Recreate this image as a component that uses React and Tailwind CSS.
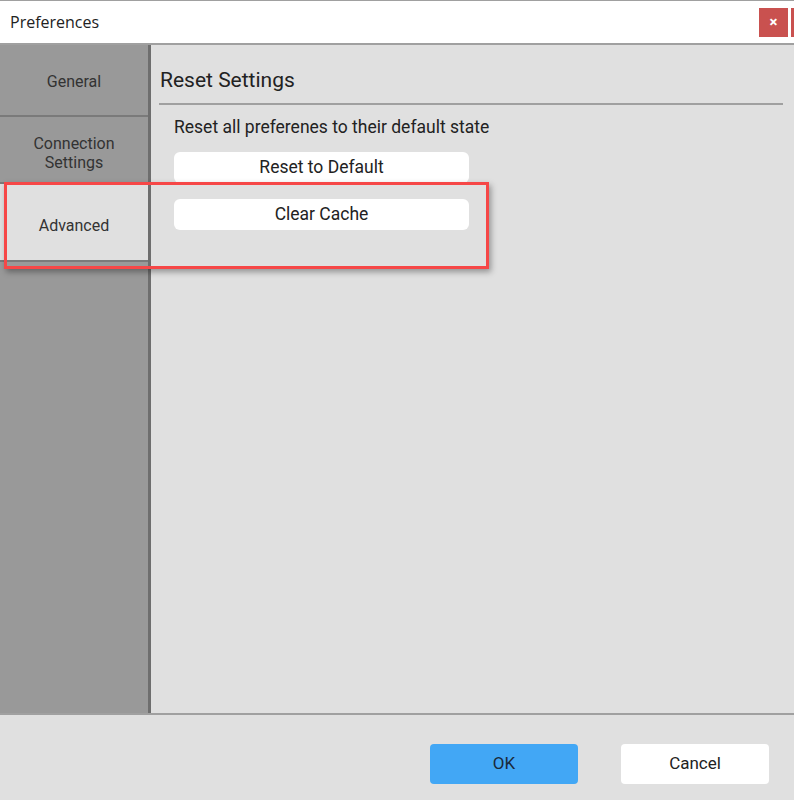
import React from "react";

export default function App() {
  return (
    <div className="relative w-[794px] h-[800px] bg-[#e0e0e0] overflow-hidden flex flex-col" style={{ fontFamily: "Roboto, 'Liberation Sans', sans-serif" }}>
      <div className="h-px bg-[#a0a0a0]" />
      <div className="h-[42px] bg-white border-b-2 border-[#a0a0a0] flex items-center box-content">
        <div className="pl-[10px] text-[16px] text-[#222] flex-1" style={{ fontFamily: "'Open Sans', sans-serif" }}>Preferences</div>
        <div className="w-[29px] h-[29px] bg-[#c9514f] text-white text-[15px] font-bold flex items-center justify-center mr-[3px]">×</div>
        <div className="w-[3px] h-[29px] bg-[#c9514f]" />
      </div>
      <div className="flex h-[668px] border-b-2 border-[#a0a0a0] box-content">
        <div className="w-[148px] bg-[#999999] border-r-[3px] border-[#6e6e6e] box-content flex flex-col text-[16px] text-[#333] leading-[19px]">
          <div className="h-[68px] border-b-2 border-[#7a7a7a] box-content flex items-center justify-center pt-[2px]">General</div>
          <div className="h-[59px] border-b-2 border-[#7a7a7a] box-content flex items-center justify-center text-center pt-[6px]">Connection<br />Settings</div>
          <div className="h-[70px] border-b-2 border-[#7a7a7a] box-content bg-[#e0e0e0] flex items-center justify-center pt-[6px]">Advanced</div>
        </div>
        <div className="flex-1 pl-[8px] pr-[11px] pt-[22px]">
          <div className="text-[21px] text-[#222] leading-[26px] pl-px">Reset Settings</div>
          <div className="h-[2px] bg-[#a0a0a0] mt-[10px]" />
          <div className="pl-[15px] pt-[11px]">
            <div className="text-[17.5px] text-[#222] leading-[22px]">Reset all preferenes to their default state</div>
            <div className="mt-[14px] w-[295px] flex flex-col gap-[16px]">
              <div className="h-[31px] bg-white rounded-[6px] flex items-center justify-center text-[17.5px] text-[#222]">Reset to Default</div>
              <div className="h-[31px] bg-white rounded-[6px] flex items-center justify-center text-[17.5px] text-[#222]">Clear Cache</div>
            </div>
          </div>
        </div>
      </div>
      <div className="flex-1 flex items-start justify-end pt-[29px] pr-[25px] gap-[43px]">
        <div className="w-[148px] h-[40px] bg-[#42a7f5] rounded-[4px] flex items-center justify-center text-[17px] text-[#1a2a3a]">OK</div>
        <div className="w-[148px] h-[40px] bg-white rounded-[4px] flex items-center justify-center text-[17px] text-[#222]">Cancel</div>
      </div>
      <div className="absolute left-[4px] top-[182px] w-[485px] h-[87px] border-[3px] border-[#f64747] shadow-[2px_3px_6px_rgba(0,0,0,0.35)]" />
    </div>
  );
}
